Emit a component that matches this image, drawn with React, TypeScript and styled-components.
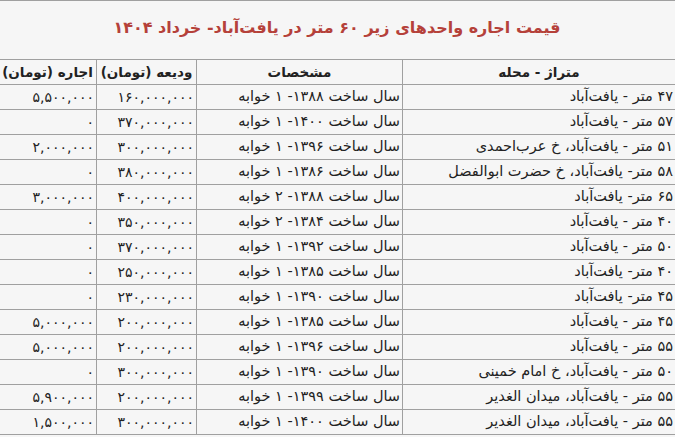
import React from 'react';
import styled, { createGlobalStyle } from 'styled-components';

type Unit = {
    location: string;
    spec: string;
    deposit: string;
    rent: string;
};

const units: Unit[] = [
    { location: '۴۷ متر - یافت‌آباد', spec: 'سال ساخت ۱۳۸۸- ۱ خوابه', deposit: '۱۶۰,۰۰۰,۰۰۰', rent: '۵,۵۰۰,۰۰۰' },
    { location: '۵۷ متر - یافت‌آباد', spec: 'سال ساخت ۱۴۰۰- ۱ خوابه', deposit: '۳۷۰,۰۰۰,۰۰۰', rent: '۰' },
    { location: '۵۱ متر - یافت‌آباد، خ عرب‌احمدی', spec: 'سال ساخت ۱۳۹۶- ۱ خوابه', deposit: '۳۰۰,۰۰۰,۰۰۰', rent: '۲,۰۰۰,۰۰۰' },
    { location: '۵۸ متر- یافت‌آباد، خ حضرت ابوالفضل', spec: 'سال ساخت ۱۳۸۶- ۱ خوابه', deposit: '۳۸۰,۰۰۰,۰۰۰', rent: '۰' },
    { location: '۶۵ متر- یافت‌آباد', spec: 'سال ساخت ۱۳۸۸- ۲ خوابه', deposit: '۴۰۰,۰۰۰,۰۰۰', rent: '۳,۰۰۰,۰۰۰' },
    { location: '۴۰ متر - یافت‌آباد', spec: 'سال ساخت ۱۳۸۴- ۲ خوابه', deposit: '۳۵۰,۰۰۰,۰۰۰', rent: '۰' },
    { location: '۵۰ متر - یافت‌آباد', spec: 'سال ساخت ۱۳۹۲- ۱ خوابه', deposit: '۳۷۰,۰۰۰,۰۰۰', rent: '۰' },
    { location: '۴۰ متر- یافت‌آباد', spec: 'سال ساخت ۱۳۸۵- ۱ خوابه', deposit: '۲۵۰,۰۰۰,۰۰۰', rent: '۰' },
    { location: '۴۵ متر- یافت‌آباد', spec: 'سال ساخت ۱۳۹۰- ۱ خوابه', deposit: '۲۳۰,۰۰۰,۰۰۰', rent: '۰' },
    { location: '۴۵ متر - یافت‌آباد', spec: 'سال ساخت ۱۳۸۵- ۱ خوابه', deposit: '۲۰۰,۰۰۰,۰۰۰', rent: '۵,۰۰۰,۰۰۰' },
    { location: '۵۵ متر - یافت‌آباد', spec: 'سال ساخت ۱۳۹۶- ۱ خوابه', deposit: '۲۰۰,۰۰۰,۰۰۰', rent: '۵,۰۰۰,۰۰۰' },
    { location: '۵۰ متر - یافت‌آباد، خ امام خمینی', spec: 'سال ساخت ۱۳۹۰- ۱ خوابه', deposit: '۳۰۰,۰۰۰,۰۰۰', rent: '۰' },
    { location: '۵۵ متر - یافت‌آباد، میدان الغدیر', spec: 'سال ساخت ۱۳۹۹- ۱ خوابه', deposit: '۲۰۰,۰۰۰,۰۰۰', rent: '۵,۹۰۰,۰۰۰' },
    { location: '۵۵ متر - یافت‌آباد، میدان الغدیر', spec: 'سال ساخت ۱۴۰۰- ۱ خوابه', deposit: '۳۰۰,۰۰۰,۰۰۰', rent: '۱,۵۰۰,۰۰۰' },
];

const GlobalStyle = createGlobalStyle`
    html, body {
        margin: 0;
        padding: 0;
        background: #f6f6f6;
        overflow: hidden;
    }
`;

const App: React.FC = () => {
    return (
        <>
            <GlobalStyle />
            <Page dir="rtl">
                <PriceTable>
                    <colgroup>
                        <col style={{ width: 273 }} />
                        <col style={{ width: 206 }} />
                        <col style={{ width: 100 }} />
                        <col style={{ width: 98 }} />
                    </colgroup>
                    <thead>
                        <tr>
                            <TitleCell colSpan={4}>
                                قیمت اجاره واحدهای زیر ۶۰ متر در یافت‌آباد- خرداد ۱۴۰۴
                            </TitleCell>
                        </tr>
                        <tr>
                            <HeadCell>متراژ - محله</HeadCell>
                            <HeadCell>مشخصات</HeadCell>
                            <HeadCell>ودیعه (تومان)</HeadCell>
                            <HeadCell>اجاره (تومان)</HeadCell>
                        </tr>
                    </thead>
                    <tbody>
                        {units.map((unit, i) => (
                            <tr key={i}>
                                <Cell>{unit.location}</Cell>
                                <Cell>{unit.spec}</Cell>
                                <Cell $numeric>{unit.deposit}</Cell>
                                <Cell $numeric>{unit.rent}</Cell>
                            </tr>
                        ))}
                    </tbody>
                </PriceTable>
            </Page>
        </>
    );
};

export default App;

const Page = styled.div`
    width: 675px;
    height: 437px;
    overflow: hidden;
    font-family: 'DejaVu Sans', 'Noto Sans', sans-serif;
`;

const PriceTable = styled.table`
    width: 677px;
    margin-right: -1px;
    border-collapse: collapse;
    table-layout: fixed;
    color: #222;
    font-size: 14.5px;
`;

const TitleCell = styled.th`
    height: 52px;
    padding: 0 0 6px;
    border-top: 1px solid #a0a0a0;
    color: #b5413a;
    font-size: 16px;
    font-weight: bold;
    text-align: center;
    vertical-align: middle;
`;

const HeadCell = styled.th`
    height: 24px;
    padding: 0 2px;
    border: 1px solid #a0a0a0;
    font-size: 13.5px;
    font-weight: bold;
    text-align: center;
    vertical-align: middle;
    white-space: nowrap;
`;

const Cell = styled.td<{ $numeric?: boolean }>`
    height: 24px;
    padding: 0 2px 0 1px;
    border: 1px solid #a0a0a0;
    text-align: right;
    vertical-align: middle;
    white-space: nowrap;
    overflow: hidden;
    line-height: 1.2;
    font-size: ${({ $numeric }) => ($numeric ? '14px' : 'inherit')};
`;
